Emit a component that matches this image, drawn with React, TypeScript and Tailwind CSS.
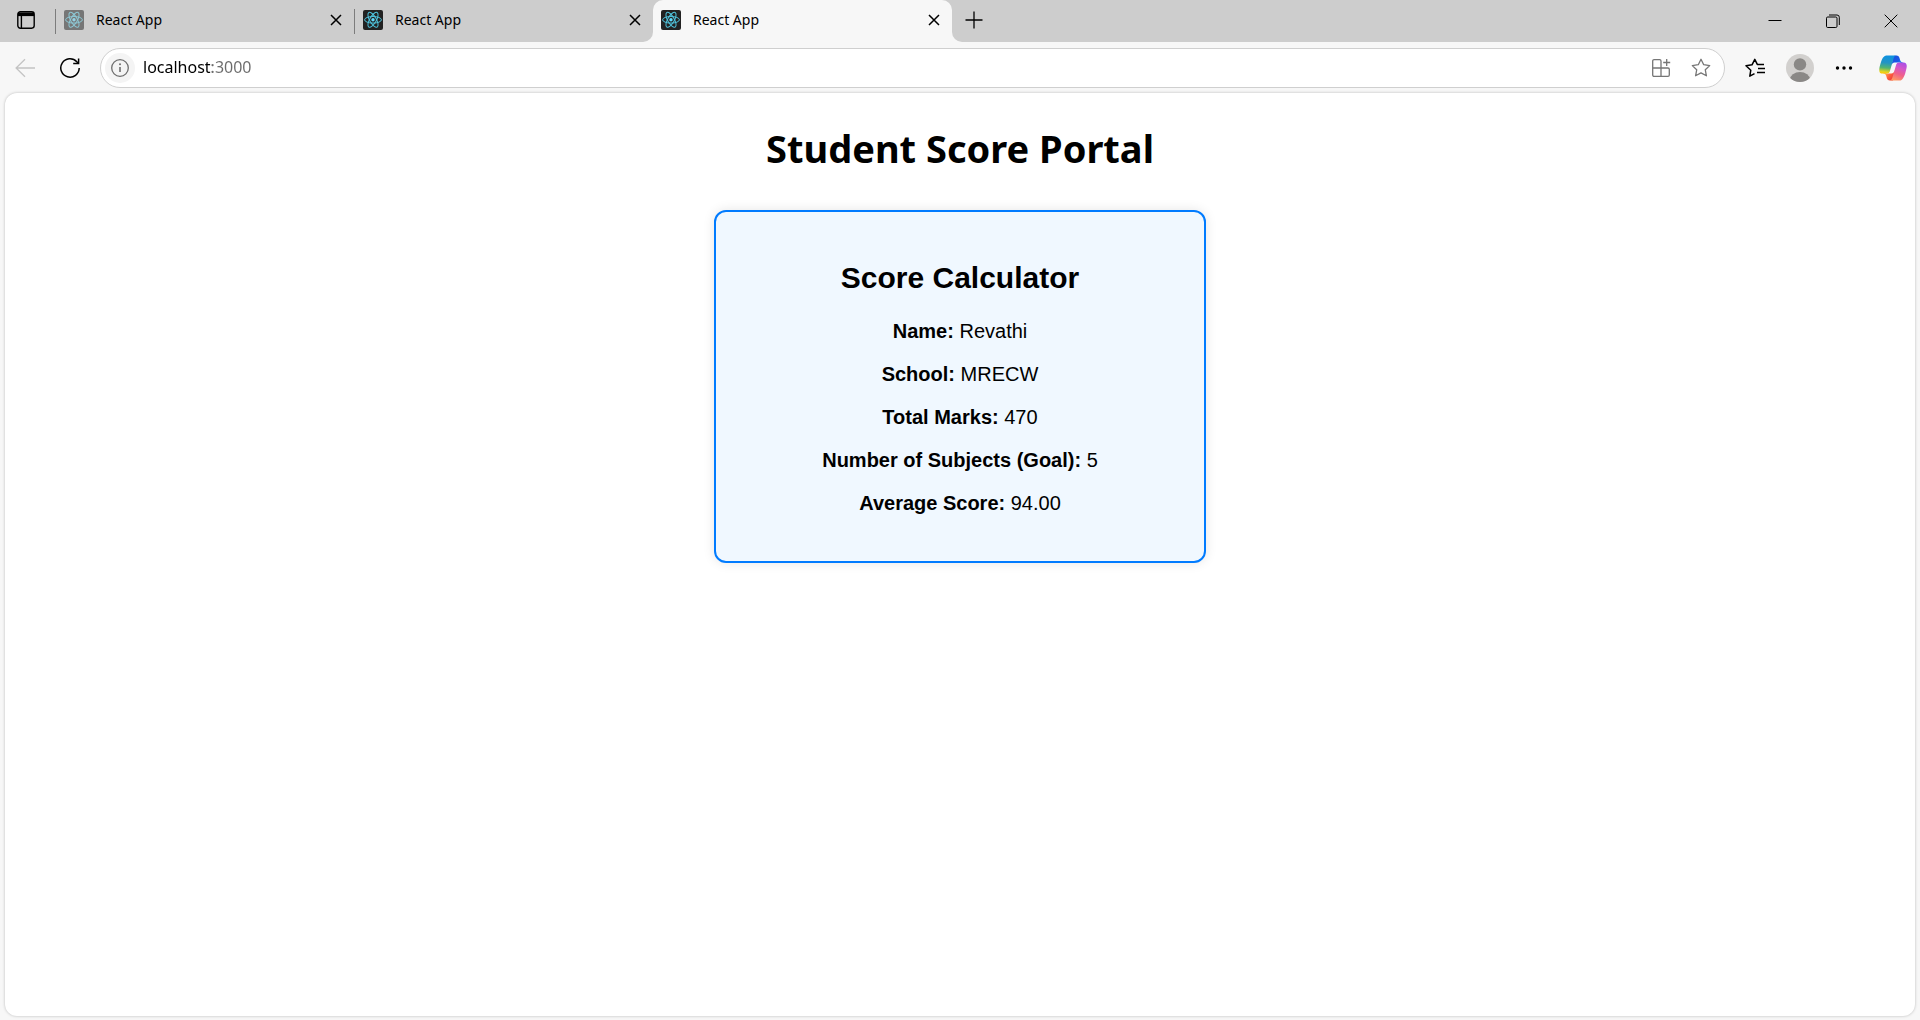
import type { ReactNode } from "react";

function ReactFavicon({ faded = false }: { faded?: boolean }) {
  return (
    <svg viewBox="0 0 20 20" className={faded ? "size-5 shrink-0 opacity-50" : "size-5 shrink-0"} aria-hidden="true">
      <rect width="20" height="20" rx="2" fill="#222222" />
      <g fill="none" stroke="#4fc3dc" strokeWidth="1">
        <ellipse cx="10" cy="9.8" rx="8.4" ry="3.3" />
        <ellipse cx="10" cy="9.8" rx="8.4" ry="3.3" transform="rotate(60 10 9.8)" />
        <ellipse cx="10" cy="9.8" rx="8.4" ry="3.3" transform="rotate(120 10 9.8)" />
      </g>
      <circle cx="10" cy="9.8" r="1.7" fill="#61dafb" />
    </svg>
  );
}

function CloseIcon() {
  return (
    <svg viewBox="0 0 12 12" className="size-3" fill="none" stroke="currentColor" strokeWidth="1.5" aria-hidden="true">
      <path d="M1 1l10 10M11 1L1 11" />
    </svg>
  );
}

function CopilotLogo() {
  return (
    <svg viewBox="0 0 48 48" className="size-[30px]" aria-hidden="true">
      <defs>
        <linearGradient id="cpTop" x1="24" y1="4" x2="38" y2="18" gradientUnits="userSpaceOnUse">
          <stop offset="0" stopColor="#1b4fd8" />
          <stop offset="0.6" stopColor="#1a5be8" />
          <stop offset="1" stopColor="#2aa5f5" />
        </linearGradient>
        <linearGradient id="cpBottom" x1="10" y1="32" x2="24" y2="44" gradientUnits="userSpaceOnUse">
          <stop offset="0" stopColor="#ffb657" />
          <stop offset="0.5" stopColor="#ff5f3d" />
          <stop offset="1" stopColor="#e8363c" />
        </linearGradient>
        <linearGradient id="cpLeft" x1="14" y1="4" x2="11" y2="33" gradientUnits="userSpaceOnUse">
          <stop offset="0" stopColor="#0d91e1" />
          <stop offset="0.4" stopColor="#2494c4" />
          <stop offset="0.68" stopColor="#52b471" />
          <stop offset="0.9" stopColor="#e3d321" />
          <stop offset="1" stopColor="#ffc800" />
        </linearGradient>
        <linearGradient id="cpRight" x1="40" y1="14" x2="28" y2="44" gradientUnits="userSpaceOnUse">
          <stop offset="0" stopColor="#a34dea" />
          <stop offset="0.35" stopColor="#d457c8" />
          <stop offset="0.65" stopColor="#f0608a" />
          <stop offset="1" stopColor="#ff9a62" />
        </linearGradient>
      </defs>
      <path fill="url(#cpTop)" d="M34.142 7.325A4.63 4.63 0 0 0 29.7 4h-1.35a4.63 4.63 0 0 0-4.554 3.794L21.48 20.407l.575-1.965a4.63 4.63 0 0 1 4.444-3.33h7.853l3.294 1.282 3.175-1.283h-.926a4.63 4.63 0 0 1-4.443-3.325l-1.31-4.461Z" />
      <path fill="url(#cpBottom)" d="M14.33 40.656A4.63 4.63 0 0 0 18.779 44h2.87a4.63 4.63 0 0 0 4.629-4.51l.312-12.163-.654 2.233a4.63 4.63 0 0 1-4.443 3.329h-7.919l-2.823-1.532-3.057 1.532h.912a4.63 4.63 0 0 1 4.447 3.344l1.279 4.423Z" />
      <path fill="url(#cpLeft)" d="M29.5 4H13.46c-4.583 0-7.332 6.057-9.165 12.113C2.123 23.29-.72 32.885 7.503 32.885h6.925a4.63 4.63 0 0 0 4.456-3.358 2078.617 2078.617 0 0 1 4.971-17.156c.843-2.843 1.544-5.284 2.621-6.805C27.08 4.714 28.086 4 29.5 4Z" />
      <path fill="url(#cpRight)" d="M18.498 44h16.04c4.582 0 7.332-6.058 9.165-12.115 2.172-7.177 5.013-16.775-3.208-16.775h-6.926a4.63 4.63 0 0 0-4.456 3.358 2084.036 2084.036 0 0 1-4.972 17.16c-.842 2.844-1.543 5.285-2.62 6.806-.604.852-1.61 1.566-3.023 1.566Z" />
    </svg>
  );
}

function Tab({ faded }: { faded?: boolean }) {
  return (
    <div className="flex h-10 min-w-0 flex-1 items-center">
      <button className="flex min-w-0 flex-1 items-center gap-3 text-left">
        <ReactFavicon faded={faded} />
        <span className="truncate text-sm leading-5">React App</span>
      </button>
      <button aria-label="Close tab" className="flex size-6 items-center justify-center">
        <CloseIcon />
      </button>
    </div>
  );
}

function WindowButton({ label, children }: { label: string; children: ReactNode }) {
  return (
    <button aria-label={label} className="flex h-[42px] w-[58px] items-center justify-center">
      <svg viewBox="0 0 14 14" className="size-3.5" fill="none" stroke="currentColor" aria-hidden="true">
        {children}
      </svg>
    </button>
  );
}

function TabStrip() {
  return (
    <header className="flex h-[43px] bg-[#f7f7f7] text-black">
      <div className="flex h-[42px] w-[653px] items-start rounded-br-[10px] bg-[#cdcdcd]">
        <button aria-label="Tab actions" className="flex h-10 w-[55px] items-center justify-center pr-1">
          <svg viewBox="0 0 18 18" className="size-[18px]" fill="none" stroke="currentColor" strokeWidth="1.4" aria-hidden="true">
            <rect x="0.8" y="0.8" width="16.4" height="16.4" rx="2.6" />
            <path d="M1 1.5h16v3.6H1z" fill="currentColor" stroke="none" />
            <path d="M4.4 5v12" />
          </svg>
        </button>
        <div className="flex flex-1 items-start">
          <span className="mt-[9px] h-[25px] w-px bg-[#7c7c7c]" />
          <div className="flex flex-1 pr-1.5 pl-2">
            <Tab faded />
          </div>
          <span className="mt-[9px] h-[25px] w-px bg-[#7c7c7c]" />
          <div className="flex flex-1 pr-1.5 pl-2">
            <Tab />
          </div>
        </div>
      </div>
      <div className="bg-[#cdcdcd]">
        <div className="flex h-[43px] w-[299px] rounded-t-[10px] bg-[#f7f7f7] pr-1.5 pl-2">
          <Tab />
        </div>
      </div>
      <div className="flex h-[42px] flex-1 items-start rounded-bl-[10px] bg-[#cdcdcd]">
        <button aria-label="New tab" className="ml-2 flex h-10 w-7 items-center justify-center">
          <svg viewBox="0 0 18 18" className="size-[18px]" fill="none" stroke="currentColor" strokeWidth="1.3" aria-hidden="true">
            <path d="M9 0.5v17M0.5 9h17" />
          </svg>
        </button>
        <div className="ml-auto flex">
          <WindowButton label="Minimize">
            <path d="M0.5 6.5h13" />
          </WindowButton>
          <WindowButton label="Restore">
            <rect x="0.5" y="3" width="10.5" height="10.5" rx="1.2" />
            <path d="M3 1h8a2.3 2.3 0 0 1 2.3 2.3V11" />
          </WindowButton>
          <WindowButton label="Close window">
            <path d="M0.7 0.7l12.6 12.6M13.3 0.7L0.7 13.3" />
          </WindowButton>
        </div>
      </div>
    </header>
  );
}

const STAR = "M10 1.3l2.7 5.4 6 .9-4.4 4.2 1.1 6-5.4-2.9-5.4 2.9 1.1-6L1.3 7.6l6-.9z";

function Toolbar() {
  return (
    <nav aria-label="Browser toolbar" className="flex h-[50px] items-center bg-[#f7f7f7] pr-3">
      <button aria-label="Back" className="flex w-[50px] justify-center text-[#c4c4c4]">
        <svg viewBox="0 0 20 20" className="size-5" fill="none" stroke="currentColor" strokeWidth="1.3" aria-hidden="true">
          <path d="M20 10H1M10 1.2L1.1 10l8.9 8.8" />
        </svg>
      </button>
      <button aria-label="Refresh" className="flex w-10 justify-center text-black">
        <svg viewBox="0 0 20 20" className="size-5" fill="none" stroke="currentColor" strokeWidth="1.5" aria-hidden="true">
          <path d="M19.2 10A9.2 9.2 0 1 1 16.8 3.8L18.3 5.4" />
          <path d="M18.6 0.4v5.2h-5.4" />
        </svg>
      </button>
      <div className="ml-2.5 flex h-10 min-w-0 flex-1 items-center gap-2 rounded-full border border-[#cfcfcf] bg-white pr-[7px] pl-1">
        <button aria-label="View site information" className="flex size-[30px] shrink-0 items-center justify-center rounded-full bg-[#f4f4f4] text-[#6e6e6e]">
          <svg viewBox="0 0 18 18" className="size-[18px]" fill="none" stroke="currentColor" strokeWidth="1.3" aria-hidden="true">
            <circle cx="9" cy="9" r="8.3" />
            <path d="M9 8v5" strokeWidth="1.6" />
            <circle cx="9" cy="5.3" r="1" fill="currentColor" stroke="none" />
          </svg>
        </button>
        <input
          aria-label="Address"
          defaultValue="localhost:3000"
          className="h-8 min-w-0 flex-1 bg-linear-[to_right,#000000_69px,#6b6b6b_69px] bg-clip-text pb-0.5 text-base text-transparent outline-none"
        />
        <button aria-label="App available" className="flex w-8 justify-center text-[#767676]">
          <svg viewBox="0 0 20 20" className="size-5" fill="none" stroke="currentColor" strokeWidth="1.3" aria-hidden="true">
            <path d="M10 10V3a1.3 1.3 0 0 0-1.3-1.3H3A1.3 1.3 0 0 0 1.7 3v14A1.3 1.3 0 0 0 3 18.3h14a1.3 1.3 0 0 0 1.3-1.3v-5.7A1.3 1.3 0 0 0 17 10H1.7M10 10v8.3M15.7 1v7M12.2 4.5h7" />
          </svg>
        </button>
        <button aria-label="Add this page to favorites" className="flex w-8 justify-center text-[#767676]">
          <svg viewBox="0 0 20 20" className="size-5" fill="none" stroke="currentColor" strokeWidth="1.3" strokeLinejoin="round" aria-hidden="true">
            <path d={STAR} />
          </svg>
        </button>
      </div>
      <div className="flex items-center pl-2 text-black">
        <button aria-label="Favorites" className="flex w-11 justify-center">
          <svg viewBox="0 0 20 20" className="size-5" fill="none" stroke="currentColor" strokeWidth="1.5" strokeLinejoin="round" aria-hidden="true">
            <path d="M9.5 15.6l-4.7 2.6 1-6L1 7.7l6-.9L9.8 1.300l2.500 5.100H19M13 10.500h7M12 14.500h8" />
          </svg>
        </button>
        <button aria-label="Profile" className="flex w-[46px] justify-center">
          <svg viewBox="0 0 28 28" className="size-7" aria-hidden="true">
            <clipPath id="avatarClip">
              <circle cx="14" cy="14" r="14" />
            </clipPath>
            <circle cx="14" cy="14" r="14" fill="#d2d0ce" />
            <circle cx="14" cy="10.4" r="6.2" fill="#8a8886" />
            <ellipse cx="14" cy="25.5" rx="10" ry="7.5" fill="#8a8886" clipPath="url(#avatarClip)" />
          </svg>
        </button>
        <button aria-label="Settings and more" className="flex w-[42px] justify-center">
          <svg viewBox="0 0 18 18" className="size-[18px]" fill="currentColor" aria-hidden="true">
            <circle cx="2.5" cy="9" r="1.7" />
            <circle cx="9" cy="9" r="1.7" />
            <circle cx="15.5" cy="9" r="1.7" />
          </svg>
        </button>
        <button aria-label="Copilot" className="ml-[13px] flex justify-center">
          <CopilotLogo />
        </button>
      </div>
    </nav>
  );
}

const DETAILS = [
  { label: "Name:", value: "Revathi" },
  { label: "School:", value: "MRECW" },
  { label: "Total Marks:", value: "470" },
  { label: "Number of Subjects (Goal):", value: "5" },
  { label: "Average Score:", value: "94.00" },
];

function ScoreCard() {
  return (
    <section className="mx-auto mt-[35px] w-full max-w-[492px] rounded-xl border-2 border-[#007bff] bg-[#f0f8ff] px-6 pt-12 pb-[46px] font-['Liberation_Sans',Arial,sans-serif] shadow-[0_0_12px_rgba(0,0,0,0.1)]">
      <h2 className="text-[30px] leading-9 font-bold">Score Calculator</h2>
      <div className="mt-6 flex flex-col gap-5">
        {DETAILS.map((item) => (
          <p key={item.label} className="text-xl leading-[23px]">
            <strong className="font-bold">{item.label}</strong> {item.value}
          </p>
        ))}
      </div>
    </section>
  );
}

export default function App() {
  return (
    <div className="flex min-h-screen flex-col bg-[#f7f7f7] font-['Noto_Sans','Open_Sans',sans-serif] text-black">
      <TabStrip />
      <Toolbar />
      <main className="mx-[5px] mb-1 flex-1 rounded-xl bg-white px-4 pt-7 text-center shadow-[0_0_3px_rgba(0,0,0,0.25)]">
        <h1 className="text-[38px] leading-[54px] font-bold">Student Score Portal</h1>
        <ScoreCard />
      </main>
    </div>
  );
}
